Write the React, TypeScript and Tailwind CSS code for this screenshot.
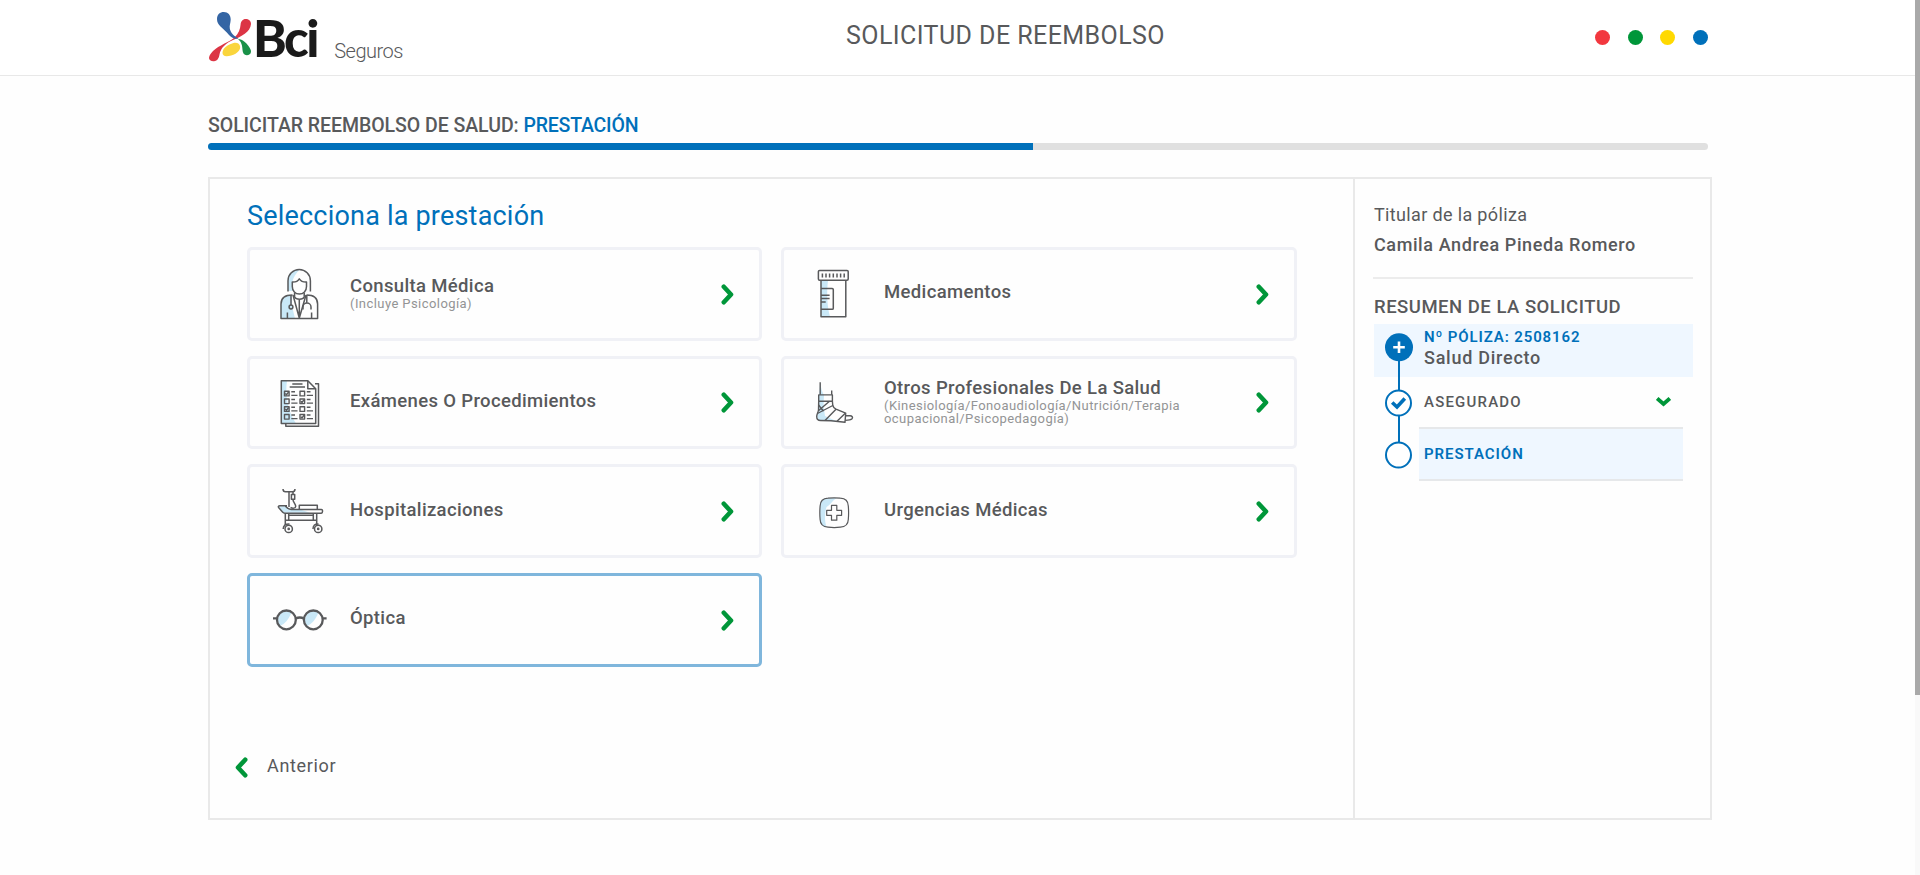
import type { ReactNode } from "react";

const INK = "#58595b";
const TINT = "#c9e8f7";

function Icon({ children, width = 1.5 }: { children: ReactNode; width?: number }) {
  return (
    <svg
      width="60"
      height="60"
      viewBox="0 0 60 60"
      fill="none"
      stroke={INK}
      strokeWidth={width}
      strokeLinejoin="round"
      className="shrink-0"
    >
      {children}
    </svg>
  );
}

function DoctorIcon() {
  return (
    <Icon>
      <path d="M18 27V16C18 9 22.5 5.5 30 5.5C26 9 23 14 22.5 18V27Z" fill={TINT} stroke="none" />
      <path d="M11 54.5V40C11 34 15 31.5 22 31V42L25 54.5Z" fill={TINT} stroke="none" />
      <path d="M18 27.5V16.7A11.2 11.2 0 0 1 40.4 16.7V27.5" />
      <path d="M22.3 18C25.5 18.2 28 17 29.3 14.8C30.8 17 33.2 18.2 36.5 18V22.5C36.5 27 33.5 30 29.4 30S22.3 27 22.3 22.5Z" />
      <path d="M24.6 29V33C26 36 33 36 34.2 33V29" />
      <path d="M22.5 31C14 31 11 34.5 11 40V54.6H47.6V40C47.6 34.5 44.5 31 36.5 31" />
      <path d="M23 31L29.3 54L36 31M29.3 36V54" />
      <path d="M21 31V41.2" />
      <circle cx="21" cy="43" r="1.9" />
      <path d="M36.8 31V38.6M33 45.4V43A4 4 0 0 1 41 43V45.4" />
      <path d="M17.4 54.5V48.5M41.6 54.5V48.5" />
    </Icon>
  );
}

function ExamsIcon() {
  const rows = [21.6, 29.3, 37.1, 44.8];
  return (
    <Icon>
      <path d="M11.3 8.8H17C15 22 17 38 26 51.4H11.3Z" fill={TINT} stroke="none" />
      <path d="M45 11.7H48.5V54.3H15.8V51.6" />
      <path d="M11.3 8.8H37.8L45.7 16.8V51.4H11.3Z" />
      <path d="M37.8 8.8V16.8H45.7" />
      <path d="M22.3 12H32.5M19.7 15H35" />
      {rows.map((y, i) => (
        <g key={y} strokeWidth="1.4">
          <rect x="14.5" y={y - 2.3} width="4.6" height="4.6" />
          <path d={`M21.3 ${y - 1.8}H25M21.3 ${y + 1.8}H27.5`} />
          <rect x="30" y={y - 2.3} width="4.6" height="4.6" />
          <path d={`M36.8 ${y - 1.8}H40.5M36.8 ${y + 1.8}H43`} />
          {i % 2 === 0 ? (
            <path d={`M15.3 ${y}L16.5 ${y + 1.2}L18.6 ${y - 1.6}`} />
          ) : (
            <path d={`M30.8 ${y}L32 ${y + 1.2}L34.1 ${y - 1.6}`} />
          )}
        </g>
      ))}
    </Icon>
  );
}

function BedIcon() {
  return (
    <Icon>
      <path d="M8.5 25.5L13.3 31.8H40L30 28.5H20L15 25Z" fill={TINT} stroke="none" />
      <path d="M13 7.9C13 10 14 10.7 15.5 10.7H22.5C24 10.7 25 10 25 7.9" />
      <path d="M19 10.7V26" />
      <path d="M23 10.7V13.4M21.4 13.4H24.7V18.2H21.4Z" />
      <path d="M23 18.2C22.5 21 26 23 25.7 25.5C25.5 27.5 22.5 27.5 20.5 26.5" />
      <path d="M17 24.7H10C8.3 24.7 8 25.8 8.8 26.8L12.5 31C13.2 31.9 14 32.2 15 32.2H51.3C52.9 32.2 53 28.4 51.3 28.4H21C18.5 28.4 17.5 27.5 15.5 25.2" />
      <path d="M29.3 28.2V24.3H47.3V28.2" />
      <path d="M15.3 32.2V44M18.7 32.2V39M43.3 32.2V39M46.7 32.2V44M15.3 39.2H46.7M18.7 34.2H43.3" />
      <circle cx="18.7" cy="47.9" r="3.7" />
      <circle cx="18.7" cy="47.9" r=".6" />
      <circle cx="48.2" cy="47.9" r="3.7" />
      <circle cx="48.2" cy="47.9" r=".6" />
      <path d="M13.2 48C13.2 44.5 15.5 42.7 19.5 42.9M43 48C43 44.5 45 42.7 48.5 42.9" />
    </Icon>
  );
}

function GlassesIcon() {
  return (
    <Icon width={2.3}>
      <path d="M10 36A9 9 0 0 1 21.5 22.5C19 29 15 34 10 36Z" fill={TINT} stroke="none" />
      <path d="M37 36A9 9 0 0 1 48.5 22.5C46 29 42 34 37 36Z" fill={TINT} stroke="none" />
      <circle cx="16.4" cy="29.9" r="9.4" />
      <circle cx="43.3" cy="29.9" r="9.4" />
      <path d="M25.8 28.6C28 27.4 31.6 27.4 34 28.6M3 28.4H7M52.8 28.4H56.6" />
    </Icon>
  );
}

function BottleIcon() {
  return (
    <Icon>
      <path d="M17 16.5H24C22.5 28 23 42 26 52.5H17Z" fill={TINT} stroke="none" />
      <rect x="14.4" y="6.4" width="29.8" height="9.8" rx="1.2" />
      <path d="M18.4 9.6V13.6M22 9.6V13.6M25.6 9.6V13.6M29.3 9.6V13.6M33 9.6V13.6M36.6 9.6V13.6M40.2 9.6V13.6" />
      <path d="M17 16.4V52.7H41.8V16.4" />
      <path d="M17 24.6H28.2Q29.3 24.6 29.3 25.7V44.2Q29.3 45.3 28.2 45.3H17" />
      <path d="M17 31.2H25.6M17 34.6H25.6M17 38H21.7" />
    </Icon>
  );
}

function FootIcon() {
  return (
    <Icon width={1.4}>
      <path d="M16.2 10.5C17 16 18 20 20 23L19.5 34L21 44L33 49.5L16 48.3C12.5 47 12.5 43 14.5 39L15 23Z" fill={TINT} stroke="none" />
      <path d="M16.2 10.3V22.8M27.7 18.6V22.8" />
      <path d="M14.7 22.9H28.4V29.2H14.7Z" />
      <path d="M14.7 29.2L14.5 38C14 41 12.7 42 12.7 44.5C12.7 47 14 48.5 16.5 48.5L27 48.7L41 50.3L41.7 41.2L32 37.2C30.2 36.3 29.3 35.2 28.8 33.5L28.4 29.2" />
      <path d="M14.7 38.5L25.5 29.2M28.8 33.5L13.4 41.5M14.6 33L18.8 38.5M32 37.2L21 48.5M41.3 41.2L33 49.2M19.5 39.2L17 36" />
      <path d="M41.5 43.8H46C48 43.8 49.3 45.3 48 46.8C46.8 48 44.5 48.2 41.2 48.4" />
    </Icon>
  );
}

function EmergencyIcon() {
  return (
    <Icon width={1.2}>
      <path d="M16 24Q16.500 17.300 23 17.200L32.500 17C28 20 27 23.500 22.500 26C20.500 33 20.500 40 22.500 46Q16.500 45.800 16 39Z" fill={TINT} stroke="none" />
      <path d="M24 17.2Q30.200 16.600 36.400 17.200Q44 17.600 44.300 25Q44.900 31.800 44.300 38.500Q44 45.800 36.400 46.200Q30.200 46.900 24 46.200Q16.400 45.800 16.100 38.500Q15.500 31.800 16.100 25Q16.400 17.600 24 17.200Z" />
      <path d="M27.500 24.400H32.800V29.300H37.600V34.300H32.800V39.200H27.500V34.300H22.700V29.300H27.500Z" />
    </Icon>
  );
}

function Chevron({ back = false }: { back?: boolean }) {
  return (
    <svg width="13" height="21" viewBox="0 0 13 21" fill="none" stroke="#009639" strokeWidth="4.6" strokeLinecap="round" strokeLinejoin="round" className="shrink-0">
      <path d={back ? "M10.200 2.800L3 10.500L10.200 18.200" : "M2.800 2.800L10 10.500L2.800 18.200"} />
    </svg>
  );
}

type Service = { title: string; note?: string; icon: ReactNode; selected?: boolean };

const services: Service[] = [
  { title: "Consulta Médica", note: "(Incluye Psicología)", icon: <DoctorIcon /> },
  { title: "Medicamentos", icon: <BottleIcon /> },
  { title: "Exámenes O Procedimientos", icon: <ExamsIcon /> },
  {
    title: "Otros Profesionales De La Salud",
    note: "(Kinesiología/Fonoaudiología/Nutrición/Terapia ocupacional/Psicopedagogía)",
    icon: <FootIcon />,
  },
  { title: "Hospitalizaciones", icon: <BedIcon /> },
  { title: "Urgencias Médicas", icon: <EmergencyIcon /> },
  { title: "Óptica", icon: <GlassesIcon />, selected: true },
];

function ServiceCard({ title, note, icon, selected }: Service) {
  return (
    <button
      className={`flex items-center rounded-[5px] border-[3px] pl-[20px] pr-[25px] text-left ${
        selected ? "border-[#7fb6dc]" : "border-[#f0f1f6]"
      }`}
    >
      {icon}
      <span className="ml-[20px] block w-[312px] pb-[2px]">
        <span className="block whitespace-nowrap text-[18.5px] font-medium leading-[21px] tracking-[0.35px]">{title}</span>
        {note && <span className="block text-[13px] leading-[13px] tracking-[0.43px] text-[#939495]">{note}</span>}
      </span>
      <span className="ml-auto pt-px">
        <Chevron />
      </span>
    </button>
  );
}

function Logo() {
  return (
    <div className="flex items-baseline">
      <svg width="44" height="52" viewBox="7 12 44 52" className="self-start">
        <path d="M50 25C50 21.500 47.500 20 44.800 20C41.500 20 39.800 22.500 39.600 25.500C39.300 30 37.500 34.500 34 38C28 43.500 18 46 12 52C9 55 8 57.500 8 59C8 61 10 62.500 13 62.300C16.500 62 18 59 18.500 55.500C19.500 49 25 44 32 41C40 37.500 49.500 33 50 25Z" fill="#dc3545" />
        <path d="M16 20C16 15.500 19 13 22.800 13C27 13 29.800 16 29.700 20.500C29.600 24 28.300 26.500 28.800 29.500C29.500 34 33 37 37.500 39.500C34 40.300 30.500 39 28 36C25 32 22.500 30.500 19.500 27.500C17.200 25.300 16 23 16 20Z" fill="#3465a4" />
        <path d="M37 40C42 40.500 45 43.500 47.500 47C49.300 49.500 50 51 50 52.500C50 55 48 56.200 45.800 56.200C43 56.200 41.700 54 41.500 51C41.300 46.500 40.500 43 37 40Z" fill="#1a9148" />
        <path d="M21.500 54C21.500 49 27 45.500 32.500 44C36 43.200 39 44.800 39.200 48C39.300 53.500 31 57.300 25.500 57.200C23 57.200 21.500 56 21.500 54Z" fill="#fad53c" />
      </svg>
      <span className="ml-px font-['Lato'] text-[51px] font-black leading-[54px] tracking-[-2.4px] text-[#1a1a1a]">Bci</span>
      <span className="ml-[17px] translate-y-px text-[20px] font-light leading-[24px] tracking-[-0.5px]">Seguros</span>
    </div>
  );
}

function Summary() {
  return (
    <aside className="w-[357px] shrink-0 border-l-2 border-[#e9e9e9] pl-[18px] pr-[17px] pt-[24px]">
      <p className="pl-px text-[18px] leading-[24px] tracking-[0.35px]">Titular de la póliza</p>
      <p className="mt-[6px] pl-px text-[18px] font-medium leading-[24px] tracking-[0.6px]">Camila Andrea Pineda Romero</p>
      <div className="mt-[20px] h-[2px] bg-[#ececec]" />
      <h2 className="mt-[16px] pl-px text-[18.5px] font-medium leading-[24px] tracking-[0.5px]">RESUMEN DE LA SOLICITUD</h2>
      <div className="relative ml-px mt-[5px]">
        <div className="h-[53px] bg-[#eff7ff] pl-[50px] pt-[4px]">
          <p className="text-[15px] font-semibold leading-[18px] tracking-[0.88px] text-[#0070ba]">Nº PÓLIZA: 2508162</p>
          <p className="mt-px text-[18px] font-medium leading-[22px] tracking-[0.74px]">Salud Directo</p>
        </div>
        <div className="flex h-[50px] items-center justify-between pl-[50px] pr-[22px]">
          <span className="pb-px text-[15px] font-medium leading-[18px] tracking-[1.2px]">ASEGURADO</span>
          <svg width="15" height="10" viewBox="0 0 15 10" fill="none" stroke="#009639" strokeWidth="3.800">
            <path d="M1.200 1.500L7.500 7L13.800 1.500" />
          </svg>
        </div>
        <div className="ml-[45px] mr-[10px] flex h-[54px] items-center border-y-2 border-[#e6e8ea] bg-[#eff7ff] pb-px pl-[5px]">
          <span className="text-[15px] font-semibold leading-[18px] tracking-[0.95px] text-[#0070ba]">PRESTACIÓN</span>
        </div>
        <svg width="30" height="138" viewBox="0 0 30 138" fill="none" stroke="#0070ba" strokeWidth="2" className="absolute left-[10px] top-[9px]">
          <path d="M15 28V57M15 83V109" />
          <circle cx="15" cy="14.300" r="14" fill="#0070ba" stroke="none" />
          <path d="M15 8.500V20.100M9.200 14.300H20.800" stroke="#fff" strokeWidth="2.600" />
          <circle cx="14.500" cy="70" r="12.500" fill="#fff" />
          <path d="M8.200 69.500L13 74L20.800 65.500" strokeWidth="3.600" />
          <circle cx="14.500" cy="122" r="12.500" fill="#fff" />
        </svg>
      </div>
    </aside>
  );
}

export default function App() {
  return (
    <div className="flex h-[875px] overflow-hidden bg-[#fefefe] font-['Roboto',sans-serif] text-[#58595b]">
      <div className="min-w-0 flex-1">
        <header className="h-[76px] border-b border-[#e8e8e8] bg-white pl-[208px]">
          <div className="flex h-[75px] w-[1500px] items-center">
            <div className="w-[638px]">
              <Logo />
            </div>
            <h1 className="pb-[3px] text-[25px] leading-[30px] tracking-[0.43px]">SOLICITUD DE REEMBOLSO</h1>
            <div className="ml-auto flex gap-[17.7px]">
              <span className="size-[15px] rounded-full bg-[#f2383f]" />
              <span className="size-[15px] rounded-full bg-[#009639]" />
              <span className="size-[15px] rounded-full bg-[#ffd900]" />
              <span className="size-[15px] rounded-full bg-[#0070ba]" />
            </div>
          </div>
        </header>
        <main className="pl-[208px] pt-[38px]">
          <h2 className="whitespace-nowrap text-[19.5px] font-medium leading-[24px] tracking-[-0.05px]">
            SOLICITAR REEMBOLSO DE SALUD: <span className="tracking-[-0.2px] text-[#0070ba]">PRESTACIÓN</span>
          </h2>
          <div className="mt-[5px] h-[7px] w-[1500px] overflow-hidden rounded-[4px] bg-[#e0e0e0]">
            <div className="h-full w-[55%] bg-[#0070ba]" />
          </div>
          <div className="mt-[27px] flex h-[643px] w-[1504px] border-2 border-[#e9e9e9]">
            <section className="flex-1 pl-[37px] pt-[21px]">
              <h2 className="text-[27px] leading-[32px] tracking-[0.2px] text-[#0070ba]">Selecciona la prestación</h2>
              <div className="mt-[15px] grid auto-rows-[93.67px] grid-cols-[515px_516px] gap-x-[19px] gap-y-[15px]">
                {services.map((s) => (
                  <ServiceCard key={s.title} {...s} />
                ))}
              </div>
              <button className="-ml-[12px] mt-[87px] flex items-center">
                <span className="pt-[3px]">
                  <Chevron back />
                </span>
                <span className="ml-[19px] text-[18px] leading-[24px] tracking-[0.65px]">Anterior</span>
              </button>
            </section>
            <Summary />
          </div>
        </main>
      </div>
      <div className="w-[5px] bg-[#f9f9f9]">
        <div className="h-[695px] bg-[#a9a9a9]" />
      </div>
    </div>
  );
}
